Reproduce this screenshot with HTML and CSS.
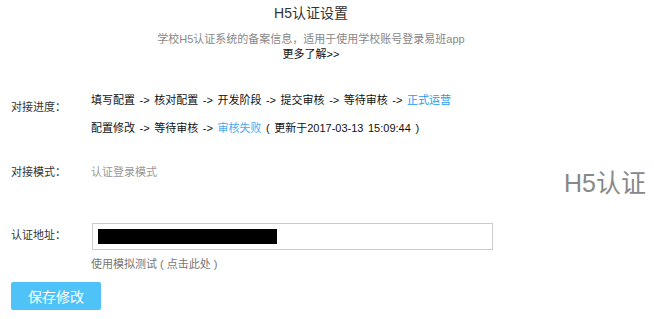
FILE: index.html
```html
<!DOCTYPE html>
<html lang="zh-CN">
<head>
<meta charset="utf-8">
<title>H5认证设置</title>
<link rel="stylesheet" href="styles.css">
</head>
<body>
<div class="page">
  <header class="header">
    <div class="title">H5认证设置</div>
    <div class="subtitle">学校H5认证系统的备案信息，适用于使用学校账号登录易班app</div>
    <div class="more">更多了解&gt;&gt;</div>
  </header>

  <div class="row row-progress">
    <div class="label label-progress">对接进度：</div>
    <div class="steps">
      <div class="step-line">填写配置 -&gt; 核对配置 -&gt; 开发阶段 -&gt; 提交审核 -&gt; 等待审核 -&gt; <span class="ok">正式运营</span></div>
      <div class="step-line">配置修改 -&gt; 等待审核 -&gt; <span class="fail">审核失败</span> ( 更新于2017-03-13 15:09:44 )</div>
    </div>
  </div>

  <div class="row row-mode">
    <div class="label">对接模式：</div>
    <div class="value">认证登录模式</div>
    <div class="badge">H5认证</div>
  </div>

  <div class="row row-addr">
    <div class="label label-addr">认证地址：</div>
    <div class="field">
      <div class="input"><span class="mask"></span></div>
      <div class="hint">使用模拟测试 ( 点击此处 )</div>
    </div>
  </div>

  <button class="save">保存修改</button>
</div>
</body>
</html>
```

FILE: styles.css
```css
html, body {
  margin: 0;
  padding: 0;
  background: #fff;
}
body {
  font-family: "Liberation Sans", "Noto Sans CJK SC", sans-serif;
  font-size: 11px;
  color: #222;
}
.page {
  width: 654px;
}
.header {
  width: 622px;
  text-align: center;
}
.title {
  font-size: 14px;
  line-height: 26px;
  color: #333;
}
.subtitle {
  margin-top: 5px;
  line-height: 16px;
  color: #888;
}
.more {
  line-height: 14px;
  color: #111;
}
.row {
  display: flex;
  align-items: flex-start;
}
.label {
  width: 80px;
  padding-left: 11px;
  line-height: 16px;
  color: #333;
  flex-shrink: 0;
}
.row-progress {
  margin-top: 31px;
}
.label-progress {
  padding-top: 7px;
}
.steps {
  display: flex;
  flex-direction: column;
  gap: 12px;
}
.step-line {
  line-height: 16px;
  color: #111;
  word-spacing: 1.5px;
  white-space: pre;
}
.ok {
  color: #1a9cf0;
}
.fail {
  color: #4aa8f2;
}
.row-mode {
  margin-top: 28px;
}
.value {
  line-height: 16px;
  color: #999;
}
.badge {
  margin-left: auto;
  margin-right: 8px;
  margin-top: 11px;
  margin-bottom: -11px;
  font-size: 25px;
  line-height: 16px;
  color: #888;
}
.row-addr {
  margin-top: 43px;
}
.label-addr {
  padding-top: 4px;
}
.field {
  display: flex;
  flex-direction: column;
}
.input {
  margin-left: 1px;
  width: 401px;
  height: 27px;
  border: 1px solid #ccc;
  padding: 5px 0 0 5px;
  box-sizing: border-box;
}
.mask {
  display: block;
  width: 179px;
  height: 15px;
  background: #000;
}
.hint {
  margin-top: 6px;
  line-height: 16px;
  color: #777;
}
.save {
  display: block;
  margin: 10px 0 0 11px;
  width: 90px;
  height: 28px;
  padding: 0;
  border: none;
  border-radius: 2px;
  background: #4fc3f7;
  color: #fff;
  font-family: "Noto Sans CJK SC", sans-serif;
  font-size: 14px;
  line-height: 28px;
  cursor: pointer;
}
```
